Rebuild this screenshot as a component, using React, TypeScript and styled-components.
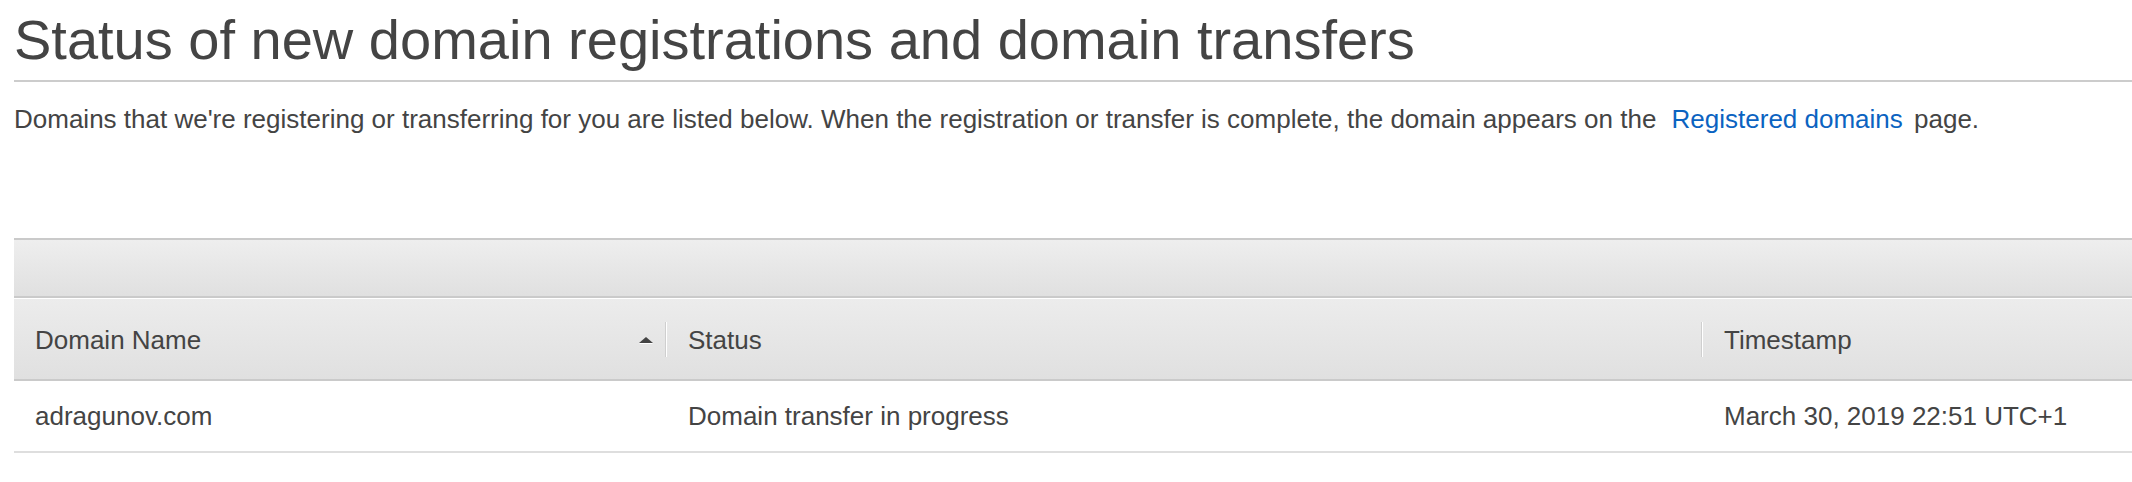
import React from "react";
import styled, { createGlobalStyle } from "styled-components";

const GlobalStyle = createGlobalStyle`
  html, body {
    margin: 0;
    padding: 0;
    background: #fff;
  }
  body {
    font-family: "Liberation Sans", Arial, Helvetica, sans-serif;
    color: #444;
  }
`;

const Page = styled.div`
  padding: 8px 0 0 14px;
`;

const Title = styled.h1`
  margin: 0;
  padding-bottom: 8px;
  font-size: 56px;
  line-height: 64px;
  font-weight: 400;
  color: #444;
  border-bottom: 2px solid #ccc;
`;

const Intro = styled.p`
  margin: 22px 0 0;
  font-size: 26px;
  line-height: 30px;
  color: #444;
`;

const Link = styled.a`
  color: #0b63c1;
  text-decoration: none;
  margin: 0 4px 0 8px;
`;

const Table = styled.div`
  margin-top: 104px;
`;

const Toolbar = styled.div`
  height: 56px;
  border-top: 2px solid #cacaca;
  border-bottom: 2px solid #cacaca;
  background: linear-gradient(#eeeeee, #e0e0e0);
`;

const columns = "651px 1036px 1fr";

const HeadRow = styled.div`
  display: grid;
  grid-template-columns: ${columns};
  height: 80px;
  margin-top: 1px;
  border-bottom: 2px solid #cacaca;
  background: linear-gradient(#ececec, #e0e0e0);
`;

const HeadCell = styled.div<{ $divider?: boolean }>`
  display: flex;
  align-items: center;
  position: relative;
  padding: 3px 12px 0 ${(p) => (p.$divider ? "23px" : "21px")};
  font-size: 26px;
  color: #444;
  &::before {
    content: "";
    display: ${(p) => (p.$divider ? "block" : "none")};
    position: absolute;
    left: 0;
    top: 23px;
    width: 1px;
    height: 35px;
    background: #cfcfcf;
    box-shadow: 1px 0 0 #fff;
  }
`;

const Label = styled.span`
  flex: 1;
`;

const SortArrow = styled.span`
  width: 0;
  height: 0;
  margin-bottom: 2px;
  border-left: 7px solid transparent;
  border-right: 7px solid transparent;
  border-bottom: 6px solid #444;
  filter: drop-shadow(0 1px 0 #fff);
`;

const Row = styled.div`
  display: grid;
  grid-template-columns: ${columns};
  height: 70px;
  border-bottom: 2px solid #dedede;
`;

const Cell = styled.div<{ $indent: number }>`
  display: flex;
  align-items: center;
  padding-left: ${(p) => p.$indent}px;
  font-size: 26px;
  color: #444;
`;

export default function App() {
  return (
    <>
      <GlobalStyle />
      <Page>
        <Title>Status of new domain registrations and domain transfers</Title>
        <Intro>
          Domains that we're registering or transferring for you are listed below. When the
          registration or transfer is complete, the domain appears on the
          <Link href="#"> Registered domains </Link>
          page.
        </Intro>
        <Table>
          <Toolbar />
          <HeadRow>
            <HeadCell>
              <Label>Domain Name</Label>
              <SortArrow />
            </HeadCell>
            <HeadCell $divider>
              <Label>Status</Label>
            </HeadCell>
            <HeadCell $divider>
              <Label>Timestamp</Label>
            </HeadCell>
          </HeadRow>
          <Row>
            <Cell $indent={21}>adragunov.com</Cell>
            <Cell $indent={23}>Domain transfer in progress</Cell>
            <Cell $indent={23}>March 30, 2019 22:51 UTC+1</Cell>
          </Row>
        </Table>
      </Page>
    </>
  );
}
